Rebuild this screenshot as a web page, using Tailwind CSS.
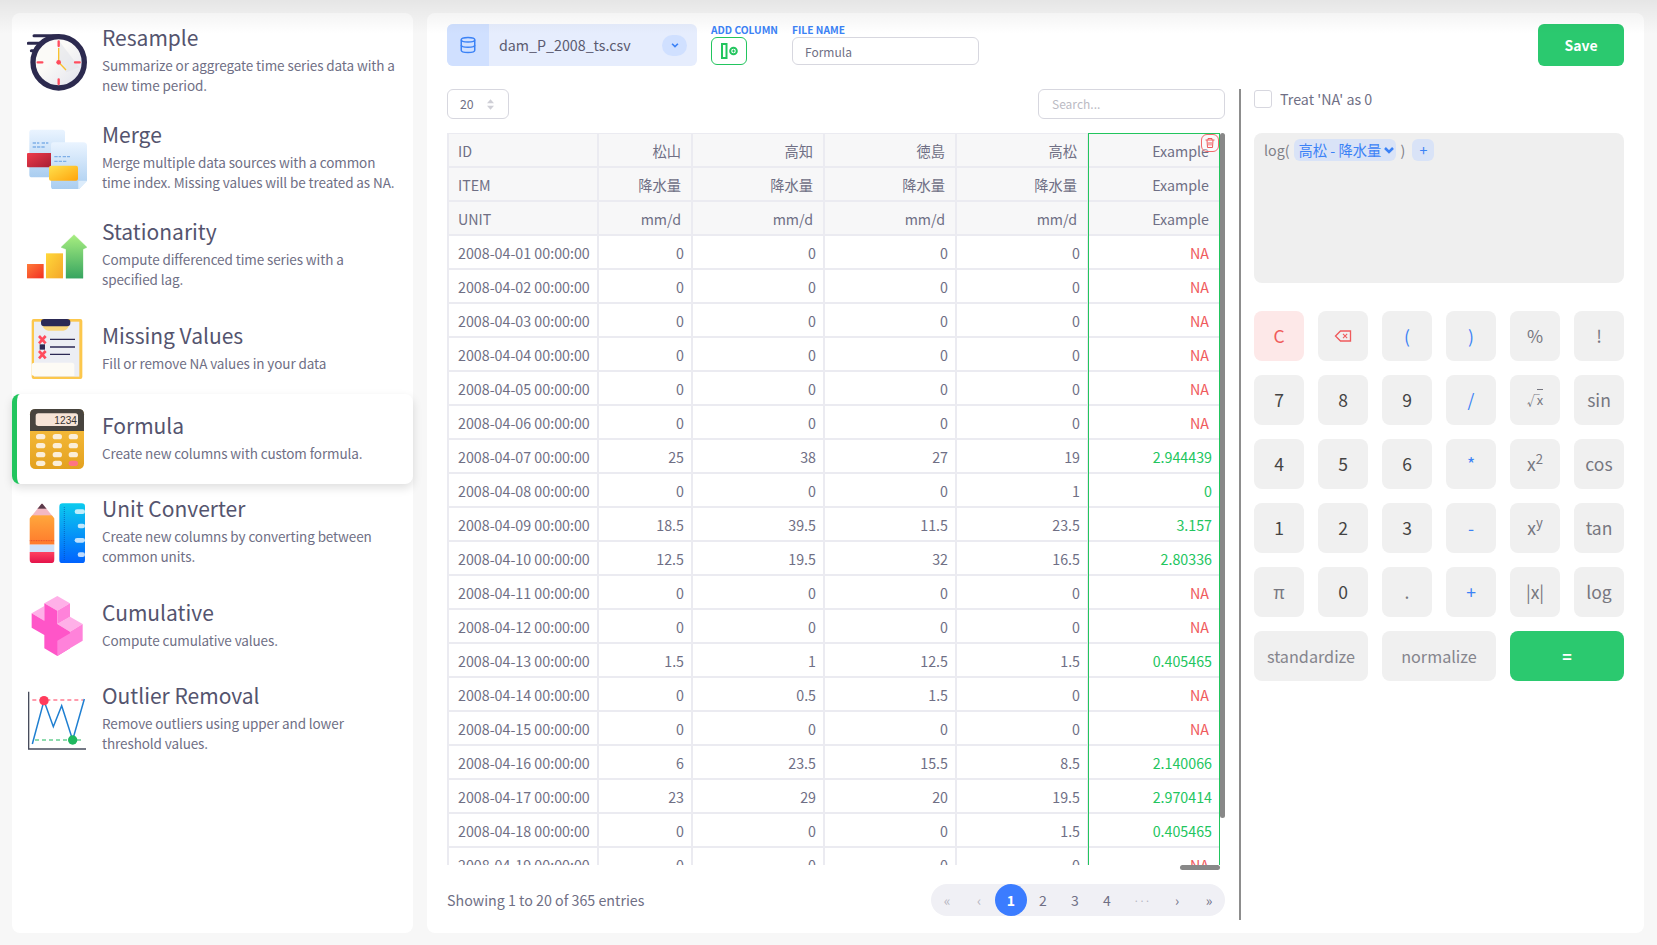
<!DOCTYPE html>
<html lang="en">
<head>
<meta charset="UTF-8" />
<title>Formula</title>
<script src="https://cdn.jsdelivr.net/npm/@tailwindcss/browser@4"></script>
</head>
<body class="relative h-screen overflow-hidden bg-[#f7f7f7] flex gap-[14px] pl-[12px] pr-[13px] pt-[13px] pb-[12px] font-['Noto_Sans_CJK_JP','Noto_Sans',sans-serif] text-[#6f6f85]">

<!-- soft shade along the top of the window -->
<div class="absolute top-0 left-0 right-0 h-[34px] bg-gradient-to-b from-black/[.07] to-transparent pointer-events-none z-20"></div>

<aside class="w-[401px] shrink-0 bg-white rounded-lg">
  <div class="h-[97px] flex items-center gap-[15px] pl-[15px] pr-[12px]">
    <svg class="w-[60px] h-[60px] shrink-0" viewBox="81 94 180 180">
      <defs><linearGradient id="face" x1="0" y1="0" x2="1" y2="1"><stop offset="0.4" stop-color="#fbfaf7"/><stop offset="1" stop-color="#dfe1ec"/></linearGradient></defs>
      <path d="M102 105H176M85 128H135M94 150H112" stroke="#2c2a4f" stroke-width="9" stroke-linecap="round"/>
      <circle cx="176" cy="185" r="77" fill="url(#face)" stroke="#2c2a4f" stroke-width="16"/>
      <path d="M176 185L178 122L238 200L200 215Z" fill="#e3e4ea" opacity=".6"/>
      <path d="M176 122V136M176 236V250M113 185H127M225 185H239" stroke="#ff4c5e" stroke-width="7" stroke-linecap="round"/>
      <path d="M176 185V142M176 185L198 208" stroke="#f9c22e" stroke-width="4" fill="none"/>
      <circle cx="176" cy="185" r="7" fill="#ff4c5e"/>
    </svg>
    <div>
      <div class="text-[21px] leading-[19px] mb-[8px] text-[#54546e]">Resample</div>
      <div class="text-[13.5px] tracking-[-0.1px] leading-[20px]">Summarize or aggregate time series data with a new time period.</div>
    </div>
  </div>
  <div class="h-[97px] flex items-center gap-[15px] pl-[15px] pr-[12px]">
    <svg class="w-[60px] h-[60px] shrink-0" viewBox="81 385 180 180">
      <defs>
        <linearGradient id="doc" x1="0" y1="0" x2="0" y2="1"><stop offset="0" stop-color="#eaf4ff"/><stop offset="1" stop-color="#a9cdf0"/></linearGradient>
        <linearGradient id="mred" x1="0" y1="0" x2="1" y2="1"><stop offset="0" stop-color="#ee3b4a"/><stop offset="1" stop-color="#a51d33"/></linearGradient>
        <linearGradient id="myel" x1="0" y1="0" x2="1" y2="1"><stop offset="0" stop-color="#ffe14d"/><stop offset="1" stop-color="#ffa40c"/></linearGradient>
      </defs>
      <rect x="88" y="387" width="107" height="143" rx="8" fill="url(#doc)"/>
      <path d="M98 427H118M125 427H145M98 439H135" stroke="#7fb0e8" stroke-width="4" stroke-dasharray="10 3"/>
      <rect x="81" y="457" width="75" height="43" rx="3" fill="url(#mred)"/>
      <path d="M161 425H250Q261 425 261 436V540L235 567H163Q153 567 153 557V435Q153 425 161 425Z" fill="url(#doc)"/>
      <path d="M261 540L235 567V540Z" fill="#dcecfb"/>
      <path d="M163 468H183M188 468H210M163 482H200" stroke="#7fb0e8" stroke-width="4" stroke-dasharray="10 3"/>
      <rect x="147" y="495" width="87" height="45" rx="6" fill="url(#myel)"/>
    </svg>
    <div>
      <div class="text-[21px] leading-[19px] mb-[8px] text-[#54546e]">Merge</div>
      <div class="text-[13.5px] tracking-[-0.1px] leading-[20px]">Merge multiple data sources with a common time index. Missing values will be treated as NA.</div>
    </div>
  </div>
  <div class="h-[97px] flex items-center gap-[15px] pl-[15px] pr-[12px]">
    <svg class="w-[60px] h-[60px] shrink-0" viewBox="81 676 180 180">
      <defs>
        <linearGradient id="sgreen" x1="0" y1="0" x2="0" y2="1"><stop offset="0" stop-color="#a8ee80"/><stop offset="1" stop-color="#37a560"/></linearGradient>
        <linearGradient id="syel" x1="0" y1="0" x2="1" y2="1"><stop offset="0" stop-color="#ffd83a"/><stop offset="1" stop-color="#f4a62a"/></linearGradient>
        <linearGradient id="sred" x1="0" y1="0" x2="1" y2="1"><stop offset="0" stop-color="#ff7b3a"/><stop offset="1" stop-color="#f22f22"/></linearGradient>
      </defs>
      <rect x="81" y="790" width="50" height="43" fill="url(#sred)"/>
      <rect x="138" y="758" width="51" height="75" fill="url(#syel)"/>
      <path d="M222 702L261 740L249 746V833H198V746L183 740Z" fill="url(#sgreen)" stroke="url(#sgreen)" stroke-width="1" stroke-linejoin="round"/>
    </svg>
    <div>
      <div class="text-[21px] leading-[19px] mb-[8px] text-[#54546e]">Stationarity</div>
      <div class="text-[13.5px] tracking-[-0.1px] leading-[20px] pr-[40px]">Compute differenced time series with a specified lag.</div>
    </div>
  </div>
  <div class="h-[90px] flex items-center gap-[15px] pl-[15px] pr-[12px]">
    <svg class="w-[60px] h-[60px] shrink-0" viewBox="81 57 180 180">
      <rect x="95" y="57" width="152" height="180" rx="6" fill="#fcc74c"/>
      <rect x="102" y="65" width="136" height="165" fill="#eceef4"/>
      <path d="M127 70H207V78Q200 92 190 92H145Q135 92 127 78Z" fill="#fbd77c"/>
      <rect x="123" y="57" width="88" height="22" rx="10" fill="#2c2a55"/>
      <path d="M117 108L137 130M137 108L117 130M117 153L137 175M137 153L117 175" stroke="#ff4c5e" stroke-width="8"/>
      <rect x="119" y="133" width="16" height="16" fill="#2c2a55"/>
      <path d="M150 118H225M150 141H225M150 163H210" stroke="#2c2a55" stroke-width="4"/>
      <path d="M95 196Q95 188 103 188H215Q223 188 223 196V228H103Q95 228 95 220Z" fill="#fdfbf5"/>
    </svg>
    <div>
      <div class="text-[21px] leading-[19px] mb-[8px] text-[#54546e]">Missing Values</div>
      <div class="text-[13.5px] tracking-[-0.1px] leading-[20px]">Fill or remove NA values in your data</div>
    </div>
  </div>
  <div class="relative z-10 h-[90px] flex items-center gap-[15px] pl-[10px] pr-[12px] bg-white rounded-lg border-l-[5px] border-[#22c55e] shadow-[0_4px_10px_rgba(0,0,0,.13)]">
    <svg class="w-[60px] h-[60px] shrink-0" viewBox="81 327 180 180">
      <defs><linearGradient id="calc" x1="0" y1="0" x2="0" y2="1"><stop offset="0" stop-color="#fdc545"/><stop offset="1" stop-color="#e3a11f"/></linearGradient></defs>
      <rect x="90" y="327" width="162" height="180" rx="16" fill="url(#calc)"/>
      <path d="M90 393V343Q90 327 106 327H236Q252 327 252 343V393Z" fill="#48443e"/>
      <rect x="107" y="340" width="127" height="38" rx="8" fill="#f6e4d6"/>
      <text x="231" y="371" text-anchor="end" font-family="Liberation Sans Narrow, Liberation Sans, sans-serif" font-size="33" fill="#3a3632" textLength="68" lengthAdjust="spacingAndGlyphs">1234</text>
      <g fill="#fbeed8">
        <rect x="108" y="402" width="28" height="16" rx="8"/><rect x="158" y="402" width="28" height="16" rx="8"/><rect x="206" y="402" width="28" height="16" rx="8"/>
        <rect x="108" y="429" width="28" height="16" rx="8"/><rect x="158" y="429" width="28" height="16" rx="8"/><rect x="206" y="429" width="28" height="16" rx="8"/>
        <rect x="108" y="456" width="28" height="16" rx="8"/><rect x="158" y="456" width="28" height="16" rx="8"/><rect x="206" y="456" width="28" height="16" rx="8"/>
        <rect x="108" y="482" width="28" height="16" rx="8"/><rect x="158" y="482" width="28" height="16" rx="8"/>
      </g>
      <rect x="206" y="482" width="28" height="16" rx="8" fill="#ff7383"/>
    </svg>
    <div>
      <div class="text-[21px] leading-[19px] mb-[8px] text-[#54546e]">Formula</div>
      <div class="text-[13.5px] tracking-[-0.1px] leading-[20px]">Create new columns with custom formula.</div>
    </div>
  </div>
  <div class="h-[97px] flex items-center gap-[15px] pl-[15px] pr-[12px]">
    <svg class="w-[60px] h-[60px] shrink-0" viewBox="81 608 180 180">
      <defs>
        <linearGradient id="porange" x1="0" y1="0" x2="0" y2="1"><stop offset="0" stop-color="#ffa73c"/><stop offset="1" stop-color="#ff7a2c"/></linearGradient>
        <linearGradient id="pred" x1="0" y1="0" x2="0" y2="1"><stop offset="0" stop-color="#ff4160"/><stop offset="1" stop-color="#e3124a"/></linearGradient>
        <linearGradient id="ruler" x1="0" y1="0" x2="0" y2="1"><stop offset="0" stop-color="#0ccbee"/><stop offset="1" stop-color="#0062ff"/></linearGradient>
        <clipPath id="pencil"><path d="M126 609L164 655V775Q164 789 150 789H102Q88 789 88 775V655Z"/></clipPath>
      </defs>
      <g clip-path="url(#pencil)">
        <rect x="88" y="609" width="76" height="40" fill="#f3b8c2"/>
        <rect x="88" y="609" width="76" height="16" fill="#5a3a4a"/>
        <rect x="88" y="645" width="76" height="88" fill="url(#porange)"/>
        <rect x="88" y="733" width="76" height="22" fill="#cfe0f8"/>
        <rect x="88" y="755" width="76" height="34" fill="url(#pred)"/>
        <path d="M88 721H164" stroke="#d9332a" stroke-width="2" stroke-dasharray="3 2"/>
      </g>
      <rect x="178" y="609" width="77" height="180" rx="10" fill="url(#ruler)"/>
      <path d="M193 620V780" stroke="#0b4fa8" stroke-width="2" stroke-dasharray="3 3"/>
      <g fill="#ffffff" opacity=".75">
        <rect x="224" y="627" width="31" height="14" rx="7"/><rect x="233" y="670" width="22" height="14" rx="7"/><rect x="224" y="713" width="31" height="14" rx="7"/><rect x="233" y="756" width="22" height="14" rx="7"/>
      </g>
    </svg>
    <div>
      <div class="text-[21px] leading-[19px] mb-[8px] text-[#54546e]">Unit Converter</div>
      <div class="text-[13.5px] tracking-[-0.1px] leading-[20px]">Create new columns by converting between common units.</div>
    </div>
  </div>
  <div class="h-[90px] flex items-center gap-[15px] pl-[15px] pr-[12px]">
    <svg class="w-[60px] h-[60px] shrink-0" viewBox="81 48 180 180">
      <path d="M172 48L210 70L172 92L133 70ZM95 100L133 78V122ZM172 132L210 110L248 132L210 155Z" fill="#ffb0e8"/>
      <path d="M133 70L172 92V132L210 155V205L172 228L133 205V165L95 143V100L133 122Z" fill="#ff55c8"/>
      <path d="M172 92L210 70V110L172 132ZM210 155L248 132V182L210 205ZM172 182L210 160V205L172 228Z" fill="#ff82da"/>
    </svg>
    <div>
      <div class="text-[21px] leading-[19px] mb-[8px] text-[#54546e]">Cumulative</div>
      <div class="text-[13.5px] tracking-[-0.1px] leading-[20px]">Compute cumulative values.</div>
    </div>
  </div>
  <div class="h-[97px] flex items-center gap-[15px] pl-[15px] pr-[12px]">
    <svg class="w-[60px] h-[60px] shrink-0" viewBox="81 328 180 180">
      <path d="M86 333V505H258" fill="none" stroke="#474c5c" stroke-width="4"/>
      <path d="M97 358H250" stroke="#ff3b5c" stroke-width="3.5" stroke-dasharray="12 9"/>
      <path d="M105 478H250" stroke="#1fb85f" stroke-width="3.5" stroke-dasharray="12 9"/>
      <path d="M97 490L132 360L160 438L185 375L218 478L253 355" fill="none" stroke="#1f7fd1" stroke-width="4.5"/>
      <circle cx="132" cy="360" r="14" fill="#ff3b5c"/>
      <circle cx="218" cy="478" r="14" fill="#1fb85f"/>
    </svg>
    <div>
      <div class="text-[21px] leading-[19px] mb-[8px] text-[#54546e]">Outlier Removal</div>
      <div class="text-[13.5px] tracking-[-0.1px] leading-[20px] pr-[20px]">Remove outliers using upper and lower threshold values.</div>
    </div>
  </div>
</aside>

<main class="flex-1 min-w-0 bg-white rounded-lg px-5 pt-[11px] flex flex-col">
  <!-- top bar -->
  <div class="h-[42px] flex items-start shrink-0">
    <div class="w-[250px] h-[42px] flex items-center bg-[#e6edfd] rounded-md">
      <div class="w-[42px] h-[42px] flex items-center justify-center bg-[#d0e0ff] rounded-l-md">
        <svg class="w-[18px] h-[18px] text-[#3b82f6]" viewBox="0 0 24 24" fill="none" stroke="currentColor" stroke-width="2"><ellipse cx="12" cy="5" rx="9" ry="3"/><path d="M3 5v14c0 1.700 4 3 9 3s9-1.300 9-3V5"/><path d="M3 12c0 1.700 4 3 9 3s9-1.300 9-3"/></svg>
      </div>
      <span class="ml-[10px] text-[14.25px] text-[#5b5b70]">dam_P_2008_ts.csv</span>
      <div class="ml-auto mr-[10px] w-[25px] h-[21px] rounded-full bg-[#d0e0ff] flex items-center justify-center">
        <svg class="w-[10px] h-[10px] text-[#3b82f6]" viewBox="0 0 24 24" fill="none" stroke="currentColor" stroke-width="4"><path d="M5 9l7 7 7-7"/></svg>
      </div>
    </div>
    <div class="ml-[14px] w-[66px] -mt-[2px]">
      <div class="text-[10.2px] leading-[15px] font-bold text-[#3b82f6] whitespace-nowrap">ADD COLUMN</div>
      <div class="w-[36px] h-[28px] border border-[#22c55e] rounded-md flex items-center justify-center">
        <svg class="w-[24px] h-[18px]" viewBox="0 0 24 18" fill="none" stroke="#22c55e" stroke-width="2"><rect x="5" y="2" width="4.500" height="14"/><circle cx="16.500" cy="9" r="3.300"/><path d="M16.500 7.500v3M15 9h3" stroke-width="1"/></svg>
      </div>
    </div>
    <div class="ml-[15px] w-[187px] -mt-[2px]">
      <div class="text-[10.2px] leading-[15px] font-bold text-[#3b82f6]">FILE NAME</div>
      <div class="h-[28px] border border-[#d7d7df] rounded-md pl-[12px] pt-[1px] flex items-center text-[12px]">Formula</div>
    </div>
    <button class="ml-auto w-[86px] h-[42px] bg-[#2bc96f] rounded-md text-white text-[14px] font-bold">Save</button>
  </div>

  <div class="flex flex-1 min-h-0 mt-[23px] mb-[13px]">
    <!-- data table -->
    <section class="w-[778px] shrink-0 flex flex-col">
      <div class="h-[30px] flex justify-between shrink-0">
        <div class="w-[62px] h-[30px] border border-[#d7d7df] rounded-md flex items-center pl-[12px] gap-[13px] text-[12.3px]">
          20
          <svg class="w-[7px] h-[11px] text-[#cfcfd6]" viewBox="0 0 8 12" fill="currentColor"><path d="M4 0l4 4.500H0zM4 12L0 7.500h8z"/></svg>
        </div>
        <div class="w-[187px] h-[30px] border border-[#d7d7df] rounded-md flex items-center pl-[13px] text-[12px] text-[#bbbbc4]">Search...</div>
      </div>

      <div class="relative mt-[14px] h-[737px] shrink-0">
        <div class="h-[732px] w-[773px] overflow-hidden">
          <table class="table-fixed border-collapse w-[773px] -mt-[1px] text-[14.25px]">
            <colgroup><col class="w-[150px]"><col class="w-[94px]"><col class="w-[132px]"><col class="w-[132px]"><col class="w-[132px]"><col class="w-[133px]"></colgroup>
            <tbody id="rows"></tbody>
          </table>
        </div>
        <!-- new column outline, its delete button, and the scroll thumbs -->
        <div class="absolute top-0 left-[641px] w-[132px] h-[732px] border-x border-t border-[#22c55e] pointer-events-none"></div>
        <div class="absolute top-[1px] left-[754px] w-[18px] h-[18px] border border-[#f0696b] rounded-md flex items-center justify-center bg-white/40">
          <svg class="w-[12px] h-[12px] text-[#ef5a5c]" viewBox="0 0 24 24" fill="none" stroke="currentColor" stroke-width="2"><path d="M3 6h18M8 6V3h8v3M6 6l1 15h10l1-15M10 10v7M14 10v7"/></svg>
        </div>
        <div class="absolute top-0 left-[773px] w-[5px] h-[685px] bg-[#888888] rounded-full"></div>
        <div class="absolute top-[732px] left-[733px] w-[40px] h-[5px] bg-[#888888] rounded-full"></div>
      </div>

      <div class="flex items-center justify-between mt-[14px] h-[32px] shrink-0">
        <span class="text-[14.25px]">Showing 1 to 20 of 365 entries</span>
        <div class="flex h-[32px] rounded-full bg-[#f0f0f5] text-[14px]">
          <span class="w-[32px] flex items-center justify-center text-[#b4b4bf]">«</span>
          <span class="w-[32px] flex items-center justify-center text-[#b4b4bf]">‹</span>
          <span class="w-[32px] flex items-center justify-center rounded-full bg-[#3b7cff] text-white font-bold">1</span>
          <span class="w-[32px] flex items-center justify-center">2</span>
          <span class="w-[32px] flex items-center justify-center">3</span>
          <span class="w-[32px] flex items-center justify-center">4</span>
          <span class="w-[38px] flex items-center justify-center text-[#b4b4bf] text-[10px]">···</span>
          <span class="w-[32px] flex items-center justify-center">›</span>
          <span class="w-[32px] flex items-center justify-center">»</span>
        </div>
      </div>
    </section>

    <div class="w-[2px] ml-[14px] bg-[#8d8d8d] shrink-0"></div>

    <!-- formula editor -->
    <section class="w-[370px] ml-[13px] shrink-0">
      <div class="h-[30px] flex items-start pt-[1px]">
        <div class="w-[18px] h-[18px] border border-[#d7d7df] rounded-[3px]"></div>
        <span class="ml-[8px] text-[14.25px] leading-[18px]">Treat 'NA' as 0</span>
      </div>
      <div class="mt-[14px] h-[150px] bg-[#efefef] rounded-lg pt-[6px] pl-[10px] flex items-start text-[14.25px] leading-[22px] text-[#808088]">
        <span>log(</span>
        <span class="ml-[4px] h-[22px] w-[102px] rounded-md bg-[#d9e3f7] text-[#3b82f6] flex items-center pl-[5px] gap-[2px] whitespace-nowrap">高松 - 降水量
          <svg class="w-[12px] h-[12px]" viewBox="0 0 24 24" fill="none" stroke="currentColor" stroke-width="5"><path d="M4 8l8 8 8-8"/></svg>
        </span>
        <span class="ml-[5px]">)</span>
        <span class="ml-[7px] w-[22px] h-[22px] rounded-md bg-[#d9e3f7] text-[#3b82f6] flex items-center justify-center">+</span>
      </div>

      <div class="mt-[28px] grid grid-cols-6 gap-[14px] text-[17.5px]">
        <button class="h-[50px] rounded-lg bg-[#fde8e8] text-[#f05a5a]">C</button>
        <button class="h-[50px] rounded-lg bg-[#f0f0f0] flex items-center justify-center text-[#ef5a5c]">
          <svg class="w-[20px] h-[20px]" viewBox="0 0 24 24" fill="none" stroke="currentColor" stroke-width="1.600"><path d="M21 6H9L3 12l6 6h12z"/><path d="M12 9.500l5 5M17 9.500l-5 5" stroke-width="1.300"/></svg>
        </button>
        <button class="h-[50px] rounded-lg bg-[#f0f0f0] text-[#3b82f6]">(</button>
        <button class="h-[50px] rounded-lg bg-[#f0f0f0] text-[#3b82f6]">)</button>
        <button class="h-[50px] rounded-lg bg-[#f0f0f0] text-[#777780]">%</button>
        <button class="h-[50px] rounded-lg bg-[#f0f0f0] text-[#777780]">!</button>
        <button class="h-[50px] rounded-lg bg-[#f0f0f0] text-[#444444]">7</button>
        <button class="h-[50px] rounded-lg bg-[#f0f0f0] text-[#444444]">8</button>
        <button class="h-[50px] rounded-lg bg-[#f0f0f0] text-[#444444]">9</button>
        <button class="h-[50px] rounded-lg bg-[#f0f0f0] text-[#3b82f6]">/</button>
        <button class="h-[50px] rounded-lg bg-[#f0f0f0] text-[#777780] text-[13px]">√<span class="-ml-[3px] border-t border-current leading-none">x</span></button>
        <button class="h-[50px] rounded-lg bg-[#f0f0f0] text-[#777780]">sin</button>
        <button class="h-[50px] rounded-lg bg-[#f0f0f0] text-[#444444]">4</button>
        <button class="h-[50px] rounded-lg bg-[#f0f0f0] text-[#444444]">5</button>
        <button class="h-[50px] rounded-lg bg-[#f0f0f0] text-[#444444]">6</button>
        <button class="h-[50px] rounded-lg bg-[#f0f0f0] text-[#3b82f6]">*</button>
        <button class="h-[50px] rounded-lg bg-[#f0f0f0] text-[#777780]">x<sup>2</sup></button>
        <button class="h-[50px] rounded-lg bg-[#f0f0f0] text-[#777780]">cos</button>
        <button class="h-[50px] rounded-lg bg-[#f0f0f0] text-[#444444]">1</button>
        <button class="h-[50px] rounded-lg bg-[#f0f0f0] text-[#444444]">2</button>
        <button class="h-[50px] rounded-lg bg-[#f0f0f0] text-[#444444]">3</button>
        <button class="h-[50px] rounded-lg bg-[#f0f0f0] text-[#3b82f6]">-</button>
        <button class="h-[50px] rounded-lg bg-[#f0f0f0] text-[#777780]">x<sup>y</sup></button>
        <button class="h-[50px] rounded-lg bg-[#f0f0f0] text-[#777780]">tan</button>
        <button class="h-[50px] rounded-lg bg-[#f0f0f0] text-[#777780]">π</button>
        <button class="h-[50px] rounded-lg bg-[#f0f0f0] text-[#444444]">0</button>
        <button class="h-[50px] rounded-lg bg-[#f0f0f0] text-[#777780]">.</button>
        <button class="h-[50px] rounded-lg bg-[#f0f0f0] text-[#3b82f6]">+</button>
        <button class="h-[50px] rounded-lg bg-[#f0f0f0] text-[#777780]">|x|</button>
        <button class="h-[50px] rounded-lg bg-[#f0f0f0] text-[#777780]">log</button>
      </div>
      <div class="mt-[14px] grid grid-cols-3 gap-[14px] text-[16.2px]">
        <button class="h-[50px] rounded-lg bg-[#f0f0f0] text-[#85858d]">standardize</button>
        <button class="h-[50px] rounded-lg bg-[#f0f0f0] text-[#85858d]">normalize</button>
        <button class="h-[50px] rounded-lg bg-[#2bc96f] text-white font-bold">=</button>
      </div>
    </section>
  </div>
</main>

<script>
const tbody = document.getElementById('rows');

const head = [
  ['ID', '松山', '高知', '徳島', '高松', 'Example'],
  ['ITEM', '降水量', '降水量', '降水量', '降水量', 'Example'],
  ['UNIT', 'mm/d', 'mm/d', 'mm/d', 'mm/d', 'Example'],
];

const data = [
  ['01', 0, 0, 0, 0, 'NA'], ['02', 0, 0, 0, 0, 'NA'], ['03', 0, 0, 0, 0, 'NA'],
  ['04', 0, 0, 0, 0, 'NA'], ['05', 0, 0, 0, 0, 'NA'], ['06', 0, 0, 0, 0, 'NA'],
  ['07', 25, 38, 27, 19, '2.944439'], ['08', 0, 0, 0, 1, '0'],
  ['09', 18.5, 39.5, 11.5, 23.5, '3.157'], ['10', 12.5, 19.5, 32, 16.5, '2.80336'],
  ['11', 0, 0, 0, 0, 'NA'], ['12', 0, 0, 0, 0, 'NA'],
  ['13', 1.5, 1, 12.5, 1.5, '0.405465'], ['14', 0, 0.5, 1.5, 0, 'NA'],
  ['15', 0, 0, 0, 0, 'NA'], ['16', 6, 23.5, 15.5, 8.5, '2.140066'],
  ['17', 23, 29, 20, 19.5, '2.970414'], ['18', 0, 0, 0, 1.5, '0.405465'],
  ['19', 0, 0, 0, 0, 'NA'],
];

head.forEach((r) => {
  const cells = r.map((v, c) => {
    if (c === 0) return `<td class="h-[34px] p-0 pl-[9px] pt-[1px] border-2 border-[#ebebf1] bg-[#f7f7f8]">${v}</td>`;
    if (c === 5) return `<td class="h-[34px] p-0 pr-[11px] pt-[1px] text-right border-2 border-[#ebebf1] bg-[#f7f7f8]">${v}</td>`;
    return `<td class="h-[34px] p-0 pr-[10px] pt-[1px] text-right border-2 border-[#ebebf1] bg-[#f7f7f8]">${v}</td>`;
  });
  tbody.insertAdjacentHTML('beforeend', `<tr>${cells.join('')}</tr>`);
});

data.forEach((r) => {
  const last = r[5] === 'NA'
    ? `<td class="h-[34px] p-0 pr-[11px] pt-[1px] text-right border-2 border-[#ebebf1] text-[#ef5a5c]">NA</td>`
    : `<td class="h-[34px] p-0 pr-[8px] pt-[1px] text-right border-2 border-[#ebebf1] text-[#22c55e]">${r[5]}</td>`;
  const nums = r.slice(1, 5).map(v => `<td class="h-[34px] p-0 pr-[7px] pt-[1px] text-right border-2 border-[#ebebf1]">${v}</td>`);
  tbody.insertAdjacentHTML('beforeend', `<tr><td class="h-[34px] p-0 pl-[9px] pt-[1px] border-2 border-[#ebebf1]">2008-04-${r[0]} 00:00:00</td>${nums.join('')}${last}</tr>`);
});
</script>
</body>
</html>
